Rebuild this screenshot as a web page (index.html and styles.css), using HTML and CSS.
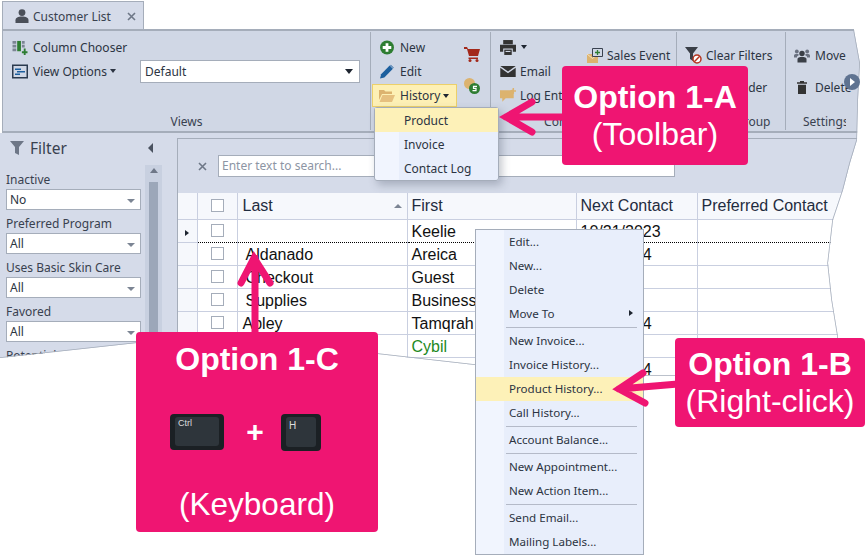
FILE: index.html
```html
<!DOCTYPE html>
<html lang="en">
<head>
<meta charset="utf-8">
<title>Customer List</title>
<link rel="stylesheet" href="styles.css">
</head>
<body>
<div class="stage">
  <div class="app">
    <div class="tabs">
      <div class="tab">
        <svg class="ic-person" viewBox="0 0 14 14"><circle cx="7" cy="3.6" r="3.4" fill="#4a4f59"/><path d="M0.5 14V11.2C0.5 8.8 3 7.6 7 7.6S13.5 8.8 13.5 11.2V14Z" fill="#4a4f59"/></svg>
        <span>Customer List</span>
        <svg class="ic-x tab-x" viewBox="0 0 9 9"><path d="M1 1L8 8M8 1L1 8" stroke="#6e7787" stroke-width="1.6"/></svg>
      </div>
    </div>
    <div class="ribbon">
      <section class="group g-views">
        <div class="g-body views-body">
          <div class="rb-item">
            <svg class="ic" viewBox="0 0 16 16"><path d="M0 1h4v3H0zM0 5h4v3H0zM0 9h4v3H0z" fill="#7c8594"/><path d="M5 1h4v11H5z" fill="#2e7d32"/><path d="M10 1h3v3h-3zM10 5h3v3h-3z" fill="#7c8594"/><path d="M12 9h2v3h2v2h-2v2h-2v-2h-2v-2h2z" fill="#2e7d32"/></svg>
            <span>Column Chooser</span>
          </div>
          <div class="views-row">
            <div class="rb-item">
              <svg class="ic" viewBox="0 0 16 14"><rect x="0.75" y="0.75" width="14.5" height="12.5" fill="none" stroke="#2b3a4e" stroke-width="1.5"/><path d="M3 4h6v1.5H3zM5 6.5h8V8H5zM3 9h5v1.5H3z" fill="#1c5f9e"/></svg>
              <span>View Options</span><i class="caret"></i>
            </div>
            <div class="combo">Default<i class="caret caret-big"></i></div>
          </div>
        </div>
        <div class="g-label">Views</div>
      </section>
      <section class="group g-actions">
        <div class="actions">
          <div class="act-col">
            <div class="rb-item act">
              <svg class="ic" viewBox="0 0 14 14"><circle cx="7" cy="7" r="6.5" fill="#2e7d32"/><path d="M5.7 3h2.6v2.7H11v2.6H8.3V11H5.7V8.3H3V5.7h2.7z" fill="#fff"/></svg>
              <span>New</span>
            </div>
            <div class="rb-item act">
              <svg class="ic" viewBox="0 0 14 14"><path d="M0.5 13.5L1.5 9.5L9.5 1.5L12.5 4.5L4.5 12.5Z" fill="#1c5f9e"/><path d="M10.5 0.8L13.3 3.6L12.9 4L10 1.2Z" fill="#1c5f9e"/></svg>
              <span>Edit</span>
            </div>
            <div class="rb-item act act-on">
              <svg class="ic" viewBox="0 0 16 13"><path d="M0 1h5l1.5 1.5H13V5H3L0 11Z" fill="#dcb36f"/><path d="M3.5 6H16l-3 7H0.5Z" fill="#e6c07f"/></svg>
              <span>History</span><i class="caret caret-dark"></i>
            </div>
          </div>
          <div class="act-icons">
            <svg class="ic" viewBox="0 0 16 16"><path d="M0 1h3l1 2h12l-2 7H5L3 3H0Z" fill="#a3281a"/><path d="M4.5 11.5H14v1.5H4.5Z" fill="#a3281a"/><circle cx="6" cy="14.5" r="1.5" fill="#a3281a"/><circle cx="13" cy="14.5" r="1.5" fill="#a3281a"/></svg>
            <svg class="ic coin" viewBox="0 0 16 16"><circle cx="5.5" cy="5.5" r="5.5" fill="#dcb36f"/><circle cx="10.5" cy="10.5" r="5.5" fill="#2e7d32"/><path d="M13 8.3H9.5V10.3H12V12.6H8.5" fill="none" stroke="#fff" stroke-width="1.2"/></svg>
          </div>
        </div>
      </section>
      <section class="group g-comm">
        <div class="g-body comm-body">
          <div class="comm-col">
            <div class="rb-item">
              <svg class="ic ic-print" viewBox="0 0 15 14"><path d="M3 0h9v4H3z" fill="#333"/><path d="M0 4.5h15V11h-3V8H3v3H0z" fill="#333"/><path d="M4 9h7v5H4z" fill="#333"/><path d="M5.2 10.2h4.6v1H5.2z" fill="#d0d7e5"/></svg>
              <i class="caret caret-dark"></i>
            </div>
            <div class="rb-item">
              <svg class="ic ic-mail" viewBox="0 0 14 10"><path d="M0 0h14L7 5Z" fill="#333"/><path d="M0 1.5L7 6.5L14 1.5V10H0Z" fill="#333"/></svg>
              <span>Email</span>
            </div>
            <div class="rb-item">
              <svg class="ic ic-log" viewBox="0 0 14 13"><path d="M0 2h9l3 -1v8H5L2 12V9H0Z" fill="#dcb36f"/><path d="M11 0h1.3v2H14v1.2h-1.7V5H11V3.200H9.300V2H11Z" fill="#dcb36f"/></svg>
              <span>Log Entry</span>
            </div>
          </div>
          <div class="comm-col comm-right">
            <div class="rb-item">
              <svg class="ic ic-sales" viewBox="0 0 16 15"><path d="M0 6h11v9H0z" fill="#dcb36f"/><path d="M0 6L5.500 10.500L11 6" fill="none" stroke="#f4e3c2" stroke-width="1"/><path d="M5.500 0.500h10v8h-10z" fill="#d0d7e5" stroke="#3a4250"/><path d="M10.500 2v5M8 4.500h5" stroke="#2e7d32" stroke-width="1.300"/></svg>
              <span>Sales Event</span>
            </div>
          </div>
        </div>
        <div class="g-label">Communicate</div>
      </section>
      <section class="group g-filter">
        <div class="g-body stack-body">
          <div class="rb-item">
            <svg class="ic ic-funnel" viewBox="0 0 17 17"><path d="M0 0h13L8 6.500V14L5 12V6.500Z" fill="#3a3f47"/><circle cx="12" cy="12" r="4" fill="#fff" stroke="#b5341f" stroke-width="1.500"/><path d="M9.300 14.700L14.700 9.300" stroke="#b5341f" stroke-width="1.500"/></svg>
            <span>Clear Filters</span>
          </div>
          <div class="rb-item">
            <svg class="ic ic-funnel" viewBox="0 0 17 17"><path d="M0 3h6l2 2h8v10H0z" fill="#dcb36f"/></svg>
            <span>Add Folder</span>
          </div>
        </div>
        <div class="g-label">Filter &amp; Group</div>
      </section>
      <section class="group g-settings">
        <div class="g-body stack-body">
          <div class="rb-item">
            <svg class="ic" viewBox="0 0 16 14"><circle cx="8" cy="5" r="2.700" fill="#3a3f47"/><path d="M3.500 14V10.500C3.500 9 5.500 8.500 8 8.500S12.500 9 12.500 10.500V14Z" fill="#3a3f47"/><circle cx="2.800" cy="3" r="1.900" fill="#6a7180"/><circle cx="13.200" cy="3" r="1.900" fill="#6a7180"/><path d="M0 9V7C0 5.800 1.500 5.400 2.800 5.400S5 5.800 5 6.500L3 8V9ZM16 9V7C16 5.800 14.500 5.400 13.200 5.400S11 5.800 11 6.500L13 8V9Z" fill="#6a7180"/></svg>
            <span>Move</span>
          </div>
          <div class="rb-item">
            <svg class="ic-trash" viewBox="0 0 10 13"><path d="M3 0h4v1.200h3V2.800H0V1.200H3Z" fill="#333"/><path d="M1 3.800h8V13H1Z" fill="#333"/></svg>
            <span>Delete</span>
          </div>
        </div>
        <div class="g-label">Settings</div>
      </section>
    </div>
    <div class="content">
      <aside class="filter">
        <div class="filter-head">
          <svg class="ic-filter" viewBox="0 0 14 14"><path d="M0 0h14L9 6v8l-4-2V6Z" fill="#6e7787"/></svg>
          <span class="filter-title">Filter</span>
          <i class="tri-left"></i>
        </div>
        <div class="filter-body">
          <div class="fields">
            <div class="f-label">Inactive</div>
            <div class="f-select">No<i class="caret caret-gray"></i></div>
            <div class="f-label">Preferred Program</div>
            <div class="f-select">All<i class="caret caret-gray"></i></div>
            <div class="f-label">Uses Basic Skin Care</div>
            <div class="f-select">All<i class="caret caret-gray"></i></div>
            <div class="f-label">Favored</div>
            <div class="f-select">All<i class="caret caret-gray"></i></div>
            <div class="f-label">Potential</div>
          </div>
          <div class="scroll"><i class="tri-up"></i><div class="thumb"></div></div>
        </div>
      </aside>
      <main class="main">
        <div class="search">
          <svg class="ic-x search-x" viewBox="0 0 9 9"><path d="M1 1L8 8M8 1L1 8" stroke="#6e7787" stroke-width="1.600"/></svg>
          <div class="search-box">Enter text to search...</div>
        </div>
        <table class="grid">
          <colgroup><col class="c-ind"><col class="c-chk"><col class="c-last"><col class="c-first"><col class="c-next"><col></colgroup>
          <thead>
            <tr><th></th><th class="chk"><i class="box"></i></th><th><div class="th-sort">Last<i class="tri-sort"></i></div></th><th>First</th><th>Next Contact</th><th>Preferred Contact</th></tr>
          </thead>
          <tbody>
            <tr class="focused"><td class="ind"><i class="tri-right"></i></td><td class="chk"><i class="box"></i></td><td></td><td>Keelie</td><td>10/21/2023</td><td></td></tr>
            <tr><td class="ind"></td><td class="chk"><i class="box"></i></td><td class="sp">Aldanado</td><td>Areica</td><td>1/21/2024</td><td></td></tr>
            <tr><td class="ind"></td><td class="chk"><i class="box"></i></td><td class="sp">Checkout</td><td>Guest</td><td></td><td></td></tr>
            <tr><td class="ind"></td><td class="chk"><i class="box"></i></td><td class="sp">Supplies</td><td>Business</td><td></td><td></td></tr>
            <tr><td class="ind"></td><td class="chk"><i class="box"></i></td><td>Abley</td><td>Tamqrah</td><td>1/21/2024</td><td></td></tr>
            <tr><td class="ind"></td><td class="chk"><i class="box"></i></td><td></td><td class="green">Cybil</td><td></td><td></td></tr>
            <tr><td class="ind"></td><td class="chk"><i class="box"></i></td><td></td><td></td><td>1/21/2024</td><td></td></tr>
          </tbody>
        </table>
      </main>
    </div>
    <svg class="tear" viewBox="0 0 867 400"><polyline points="0,358 55,352 137,343 378,354 475,365 640,376 675,376 838,376 838,337 832,300 828,263 833,220 843,190 850,163 857,140 858,100 860,63 854,30" fill="none" stroke="#a5adba" stroke-width="1.500"/></svg>
  </div>

  <svg class="play" viewBox="0 0 16 16"><circle cx="8" cy="8" r="8" fill="#5f7391"/><path d="M6 4l5 4-5 4z" fill="#fff"/></svg>

  <div class="menu menu-history">
    <div class="mi mi-on">Product</div>
    <div class="mi">Invoice</div>
    <div class="mi">Contact Log</div>
  </div>

  <div class="menu menu-context">
    <div class="mi">Edit...</div>
    <div class="mi">New...</div>
    <div class="mi">Delete</div>
    <div class="mi">Move To<i class="tri-right tri-sub"></i></div>
    <div class="sep"></div>
    <div class="mi">New Invoice...</div>
    <div class="mi">Invoice History...</div>
    <div class="mi mi-on">Product History...</div>
    <div class="mi">Call History...</div>
    <div class="sep"></div>
    <div class="mi">Account Balance...</div>
    <div class="sep"></div>
    <div class="mi">New Appointment...</div>
    <div class="mi">New Action Item...</div>
    <div class="sep"></div>
    <div class="mi">Send Email...</div>
    <div class="mi">Mailing Labels...</div>
  </div>

  <svg class="arrows" viewBox="0 0 867 555">
    <path d="M565 117H506M532 102L506 117L532 132" />
    <path d="M678 384L619 389M643 373L619 389L645 403" />
    <path d="M255 335V258M241 283L254 258L270 283" />
  </svg>

  <div class="callout call-a">
    <div class="call-title">Option 1-A</div>
    <div class="call-sub">(Toolbar)</div>
  </div>
  <div class="callout call-b">
    <div class="call-title">Option 1-B</div>
    <div class="call-sub">(Right-click)</div>
  </div>
  <div class="callout call-c">
    <div class="call-title">Option 1-C</div>
    <div class="keys">
      <div class="key key-ctrl"><span>Ctrl</span></div>
      <div class="plus">+</div>
      <div class="key key-h"><span>H</span></div>
    </div>
    <div class="call-sub">(Keyboard)</div>
  </div>
</div>
</body>
</html>
```

FILE: styles.css
```css
* { box-sizing: border-box; }
html, body { margin: 0; padding: 0; background: #fff; }
body { font: 12px "Noto Sans", "Open Sans", sans-serif; color: #2c3442; }
.stage { position: relative; width: 867px; height: 555px; overflow: hidden; background: #fff; }

/* torn-edge application window */
.app {
  position: absolute; left: 0; top: 0; width: 867px; height: 400px;
  clip-path: polygon(0 0, 854px 0, 854px 30px, 860px 63px, 858px 100px, 857px 140px, 850px 163px, 843px 190px, 833px 220px, 828px 263px, 832px 300px, 838px 337px, 838px 376px, 640px 376px, 475px 365px, 378px 354px, 137px 343px, 55px 352px, 0 358px);
  background: #fff;
}
.tear { position: absolute; left: 0; top: 0; width: 867px; height: 400px; pointer-events: none; }

.tabs { height: 29px; padding: 1px 0 0 2px; }
.tab {
  width: 142px; height: 29px; background: #d5dbe9; border: 1px solid #a5adba; border-bottom: 0;
  display: flex; align-items: center; padding-left: 12px; font-size: 12px; color: #39414f;
}
.ic-person { width: 14px; height: 14px; margin-right: 4px; }
.ic-x { width: 9px; height: 9px; }
.tab-x { margin-left: 16px; }

.ribbon {
  height: 104px; margin-left: 2px; background: #d0d7e5;
  border-top: 2px solid #a5adba; border-left: 1px solid #a5adba; border-bottom: 2px solid #a5adba;
  display: flex; padding-top: 1px;
}
.group { display: flex; flex-direction: column; border-right: 1px solid #a5adba; height: 98px; }
.g-views { width: 368px; }
.g-actions { width: 120px; }
.g-comm { width: 186px; }
.g-filter { width: 109px; }
.g-settings { width: 70px; border-right: 0; overflow: hidden; }
.g-body { flex: 1; }
.g-label { height: 18px; line-height: 20px; text-align: center; color: #39414f; white-space: nowrap; overflow: hidden; }
.g-settings .g-label { width: 60px; text-align: left; padding-left: 17px; }
.rb-item { display: flex; align-items: center; height: 24px; white-space: nowrap; color: #2c3442; }
.ic { width: 16px; height: 15px; flex: none; margin-right: 5px; }
.ic-trash { width: 10px; height: 13px; flex: none; margin: 0 8px 0 3px; }

.views-body { padding: 3px 0 0 9px; }
.views-row { display: flex; align-items: center; }
.views-row .rb-item { width: 128px; }
.combo {
  position: relative; width: 220px; height: 23px; background: #fff; border: 1px solid #a5adba;
  padding-left: 4px; line-height: 22px; color: #2c3442;
}
.caret { display: inline-block; border: 3.5px solid transparent; border-top: 4px solid #2c3442; border-bottom: 0; margin-left: 3px; }
.caret-big { position: absolute; right: 6px; top: 8px; border-width: 5px 4px 0; border-top-color: #1e2530; }
.caret-dark { border-top-color: #1e2530; }
.caret-gray { position: absolute; right: 5px; top: 9px; border-width: 4px 4px 0; border-top-color: #7c8594; }

.g-actions .actions { display: flex; padding: 3px 0 0 2px; }
.act-col { width: 88px; }
.act { padding-left: 6px; }
.act-on { width: 85px; height: 23px; margin: 1px 0 0 -1px; background: #fdf0b5; border: 1px solid #ecd06a; padding-left: 6px; }
.act-icons { display: flex; flex-direction: column; gap: 16px; padding: 11px 0 0 3px; }
.act-icons .ic { width: 16px; height: 16px; margin: 0; }

.comm-body { display: flex; padding: 3px 0 0 9px; }
.comm-col { width: 87px; }
.comm-right { padding-top: 8px; }
.ic-print { margin-right: 2px; }
.ic-mail, .ic-log { margin-right: 4px; }
.ic-mail { height: 11px; }
.ic-sales { margin-right: 4px; }

.stack-body { display: flex; flex-direction: column; gap: 8px; padding: 11px 0 0 8px; }
.ic-funnel { width: 17px; height: 17px; margin-right: 4px; }

.content { display: flex; height: 267px; padding-left: 2px; background: #d5dbe9; }
.filter { width: 175px; flex: none; }
.filter-head { height: 38px; display: flex; align-items: flex-start; padding: 5px 0 0 8px; }
.ic-filter { width: 14px; height: 14px; margin: 3px 6px 0 0; }
.filter-title { font-size: 15.500px; line-height: 21px; color: #39414f; }
.tri-left { margin: 5px 0 0 81px; border: 5px solid transparent; border-right: 5px solid #4a5260; border-left: 0; }
.filter-body { display: flex; }
.fields { width: 143px; padding-left: 4px; }
.f-label { height: 18px; line-height: 17px; color: #39414f; white-space: nowrap; }
.f-select {
  position: relative; width: 135px; height: 21px; background: #fff; border: 1px solid #a5adba;
  line-height: 20px; padding-left: 3px; margin-bottom: 5px;
}
.scroll { width: 17px; height: 246px; margin-top: -6px; padding-top: 3px; background: #c8d0e0; }
.tri-up { display: block; width: 0; margin: 0 auto; border: 4px solid transparent; border-top: 0; border-bottom: 5px solid #6e7787; }
.thumb { width: 9px; height: 200px; margin: 9px auto 0; background: #9ca7b9; }

.main { flex: 1; margin-top: 5px; background: #d5dbe9; border-left: 1px solid #a5adba; border-top: 1px solid #a5adba; min-width: 0; }
.search { height: 54px; display: flex; align-items: center; padding: 0 0 0 20px; }
.search-x { margin-right: 11px; }
.search-box { width: 457px; height: 22px; background: #fff; border: 1px solid #a5adba; padding-left: 3px; line-height: 20px; color: #8d95a4; }

.grid { width: 690px; border-collapse: collapse; table-layout: fixed; font: 16px "Liberation Sans", Arial, sans-serif; color: #111; background: #fff; }
.c-ind { width: 19px; }
.c-chk { width: 40px; }
.c-last { width: 170px; }
.c-first { width: 169px; }
.c-next { width: 121px; }
.grid th {
  height: 26px; padding: 0 4px; text-align: left; font-weight: 400; color: #1f2c40; background: #f6f8fc;
  border-right: 1px solid #c9cfe0; border-bottom: 1px solid #c9cfe0; white-space: nowrap; overflow: hidden;
}
.grid td {
  height: 23px; padding: 2px 4px 0; white-space: nowrap; overflow: hidden;
  border-right: 1px solid #c9cfe0; border-bottom: 1px solid #c9cfe0;
}
.grid td:nth-child(3), .grid th:nth-child(3) { padding-left: 5px; }
.grid td.ind { background: #f6f8fc; padding: 0; text-align: center; position: relative; }
.grid td.sp { padding-left: 8px; }
.grid td.green { color: #1e8a1e; }
.grid .chk { padding: 0; text-align: center; }
.focused td { border-top: 1px dotted #000; border-bottom: 1px dotted #000; }
.focused td.ind { border-top: 0; border-bottom-color: #c9cfe0; border-bottom-style: solid; }
.box { display: block; width: 13px; height: 13px; margin: 0 auto; background: #fff; border: 1px solid #a5adba; }
.th-sort { display: flex; justify-content: space-between; align-items: center; padding-right: 1px; }
.tri-sort { border: 4px solid transparent; border-top: 0; border-bottom: 4px solid #7c8594; }
.tri-right { display: inline-block; border: 3.500px solid transparent; border-right: 0; border-left: 4px solid #1e2530; }

/* menus */
.menu {
  position: absolute; border: 1px solid #a5adba; padding: 0;
  background: linear-gradient(90deg, #f1f5fe 0, #f1f5fe var(--strip), #e8eefb var(--strip));
}
.menu-history { --strip: 24px; left: 374px; top: 107px; width: 125px; height: 74px; border-radius: 3px; box-shadow: 3px 4px 8px rgba(60, 70, 90, .3); }
.menu-context { --strip: 28px; left: 475px; top: 229px; width: 169px; height: 326px; font-size: 11.600px; }
.mi { position: relative; height: 24px; line-height: 25px; color: #2c3442; white-space: nowrap; }
.menu-history .mi { padding-left: 29px; }
.menu-context .mi { padding-left: 33px; line-height: 24px; }
.mi-on { background: #fdf1b8; }
.tri-sub { position: absolute; right: 10px; top: 8px; }
.sep { height: 1px; margin: 1px 6px 1px 30px; background: #b4bac8; }

.play { position: absolute; left: 844px; top: 74px; width: 16px; height: 16px; }

/* annotations */
.arrows { position: absolute; left: 0; top: 0; width: 867px; height: 555px; pointer-events: none; }
.arrows path { fill: none; stroke: #ef1572; stroke-width: 7; stroke-linejoin: miter; stroke-linecap: round; }
.callout {
  position: absolute; background: #ef1572; color: #fff; border-radius: 4px; text-align: center;
  font-family: "Liberation Sans", Arial, sans-serif;
}
.call-title { font-size: 32px; font-weight: 700; line-height: 37px; }
.call-sub { font-size: 32px; line-height: 36px; }
.call-a { left: 562px; top: 66px; width: 186px; height: 99px; padding-top: 13px; }
.call-b { left: 675px; top: 338px; width: 190px; height: 89px; padding-top: 8px; }
.call-c { left: 136px; top: 332px; width: 242px; height: 200px; padding-top: 9px; }
.call-c .call-sub { font-size: 31.500px; }
.keys { display: flex; align-items: flex-start; margin: 36px 0 35px 34px; height: 37px; }
.key { position: relative; height: 36px; background: #1b2024; border-radius: 4px; padding: 3px 5px 4px; }
.key span { display: block; height: 100%; background: #2e353b; border-radius: 3px; color: #ddd; font-size: 9px; line-height: 13px; text-align: left; padding-left: 3px; }
.key-ctrl { width: 54px; }
.key-h { width: 40px; height: 37px; }
.key-h span { font-size: 10px; line-height: 18px; }
.plus { width: 57px; padding-left: 5px; font-size: 30px; font-weight: 700; line-height: 36px; }
```
